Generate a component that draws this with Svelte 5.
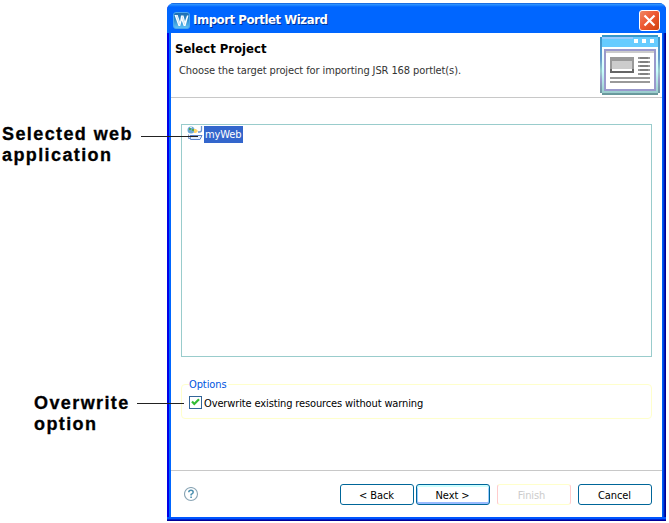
<script>
  // Tree contents and selection
  let projects = [{ id: 1, name: 'myWeb' }];
  let selected = 1;

  let overwrite = true;

  // Footer buttons
  const buttons = [
    { label: '< Back', kind: 'back' },
    { label: 'Next >', kind: 'next' },
    { label: 'Finish', kind: 'finish', disabled: true },
    { label: 'Cancel', kind: 'cancel' }
  ];
</script>

<div class="figure">
  <aside class="callouts">
    <div class="callout project">Selected web<br />application</div>
    <div class="callout option">Overwrite<br />option</div>
  </aside>

  <section class="window">
    <header class="titlebar">
      <svg class="logo" width="17" height="17" viewBox="0 0 17 17">
        <defs>
          <linearGradient id="logo-fill" x1="0" y1="0" x2="0" y2="1">
            <stop offset="0" stop-color="#1c6bb0" />
            <stop offset="0.500" stop-color="#2f8fd0" />
            <stop offset="1" stop-color="#62c4f8" />
          </linearGradient>
        </defs>
        <rect x="0.500" y="0.500" width="16" height="16" rx="2.500" fill="url(#logo-fill)" stroke="#4aa6ee" />
        <path d="M1.500 3h3.200l2.300 7L8 3.500h2.500l1.500 6L14 3.500h1.500L12.500 14h-1.800L8.700 8.500 7.200 14H5.500z" fill="#fff" />
        <path d="M3.500 3.500l3 9M9.200 4.500l2.500 8" stroke="#a5d3f2" stroke-width="0.700" />
      </svg>
      <h1>Import Portlet Wizard</h1>
      <button class="close" aria-label="Close">
        <svg width="21" height="21" viewBox="0 0 21 21">
          <defs>
            <linearGradient id="close-fill" x1="0" y1="0" x2="1" y2="1">
              <stop offset="0" stop-color="#f08a68" />
              <stop offset="0.450" stop-color="#ee5a34" />
              <stop offset="1" stop-color="#d0400c" />
            </linearGradient>
          </defs>
          <rect x="0.500" y="0.500" width="20" height="20" rx="2.500" fill="url(#close-fill)" stroke="#fff" />
          <path d="M5.500 5.500l10 10M15.500 5.500l-10 10" stroke="#fff" stroke-width="2.200" />
        </svg>
      </button>
    </header>

    <div class="banner">
      <div class="heading">
        <h2>Select Project</h2>
        <p>Choose the target project for importing JSR 168 portlet(s).</p>
      </div>
      <svg class="picture" width="60" height="60" viewBox="0 0 60 60" shape-rendering="crispEdges">
        <defs>
          <linearGradient id="frame" x1="0" y1="0" x2="0" y2="1">
            <stop offset="0" stop-color="#3399cc" />
            <stop offset="0.400" stop-color="#6699cc" />
            <stop offset="0.600" stop-color="#99cccc" />
            <stop offset="0.750" stop-color="#9999cc" />
            <stop offset="1" stop-color="#669999" />
          </linearGradient>
          <linearGradient id="frame-inner" x1="0" y1="0" x2="0" y2="1">
            <stop offset="0" stop-color="#fff" />
            <stop offset="0.500" stop-color="#ccffff" />
            <stop offset="1" stop-color="#99cccc" />
          </linearGradient>
        </defs>
        <path d="M2 0h56v2h2v56h-2v2H2v-2H0V2h2z" fill="url(#frame)" />
        <path d="M2 2h56v10H2z" fill="#66ccff" />
        <path d="M2 2h31v2H2z" fill="#99ccff" />
        <path d="M34 4h4v4h-4zM42 4h4v4h-4zM50 4h4v4h-4z" fill="#fff" />
        <path d="M2 12h56v46H2z" fill="url(#frame-inner)" />
        <path d="M4 14h52v42H4z" fill="#9999cc" />
        <path d="M6 16h48v38H6z" fill="#fff" />
        <path d="M6 16h48v2H6z" fill="#ccc" />
        <path d="M10 22h24v16H10z" fill="#666" />
        <path d="M10 22h24v12H10z" fill="#999" />
        <path d="M12 26h20v8H12z" fill="#ccc" />
        <path d="M12 34h20v2H12z" fill="#fff" />
        <path d="M38 23h12M38 27h12M38 31h12M38 35h12M38 39h12M10 43h40M10 47h40" stroke="#999" stroke-width="2" />
        <path d="M40 23h8M40 27h8M40 31h8M40 35h8M40 39h8" stroke="#808080" stroke-width="2" />
      </svg>
    </div>

    <main>
      <ul class="tree">
        {#each projects as project (project.id)}
          <li class:selected={project.id === selected}>
            <svg width="17" height="16" viewBox="0 0 17 16">
              <circle cx="4" cy="4" r="3.500" fill="#6ba8d4" />
              <path d="M2 2h2v2H2zM5 3h2v2H5z" fill="#55a855" />
              <path d="M3 1h2v1H3z" fill="#cfe8f8" />
              <path d="M7 3h2l2 2-2 2H7z" fill="#ffd36b" />
              <path d="M14.500 0v4q0 2-2 2h-1.500" fill="none" stroke="#6a94d0" stroke-width="1.300" />
              <path d="M3 9.500h12l-2 4H3.500z" fill="#e3eeff" stroke="#5a82c8" />
              <path d="M1.500 8.500v4h2" fill="none" stroke="#7f9bd0" />
            </svg>
            <span class="name">{project.name}</span>
          </li>
        {/each}
      </ul>

      <fieldset>
        <legend>Options</legend>
        <label>
          <input type="checkbox" bind:checked={overwrite} />
          <span class="box">
            {#if overwrite}
              <svg width="9" height="9" viewBox="0 0 9 9">
                <path d="M1 3.500l2.300 2.500L8 1.300" fill="none" stroke="#33bb33" stroke-width="2.200" />
              </svg>
            {/if}
          </span>
          <span class="text">Overwrite existing resources without warning</span>
        </label>
      </fieldset>
    </main>

    <footer>
      <button class="help" aria-label="Help">
        <svg width="15" height="15" viewBox="0 0 15 15">
          <circle cx="7" cy="7" r="6.500" fill="#fff" stroke="#8aa5b5" stroke-width="1.100" />
          <path d="M4.800 5.300Q4.800 3.300 7 3.300T9.200 5.200Q9.200 6.300 7.100 7.400V8.500" fill="none" stroke="#4c90b0" stroke-width="1.500" />
          <path d="M6.300 9.500h1.600V11H6.300z" fill="#4c90b0" />
        </svg>
      </button>
      <div class="actions">
        {#each buttons as button}
          <button class="action {button.kind}" disabled={button.disabled}>{button.label}</button>
        {/each}
      </div>
    </footer>
  </section>

  <!-- Leader lines run from the callouts into the dialog -->
  <i class="leader to-project"></i>
  <i class="leader to-option"></i>
</div>

<style>
  :global(body) {
    background: #fff;
    overflow: hidden;
  }

  .figure {
    position: relative;
    display: flex;
    box-sizing: border-box;
    width: 669px;
    height: 523px;
    padding-top: 3px;
    font-family: 'DejaVu Sans Condensed', 'DejaVu Sans', sans-serif;
    font-stretch: condensed;
    font-size: 11px;
    color: #000;
    white-space: nowrap;
  }

  h1,
  h2,
  p,
  ul {
    margin: 0;
    padding: 0;
  }

  button {
    padding: 0;
    font: inherit;
  }

  svg {
    display: block;
  }

  /* Callouts */
  .callouts {
    width: 167px;
    flex: none;
  }

  .callout {
    font: bold 18px/21px 'Liberation Sans', Arial, sans-serif;
    letter-spacing: 1.4px;
    -webkit-text-stroke: 0.3px #000;
  }

  .project {
    padding: 121px 0 0 2px;
  }

  .option {
    padding: 227px 0 0 34px;
  }

  .leader {
    position: absolute;
    height: 1px;
    background: #222;
  }

  .to-project {
    left: 141px;
    top: 136px;
    width: 57px;
  }

  .to-option {
    left: 137px;
    top: 403px;
    width: 47px;
  }

  /* Window frame */
  .window {
    display: flex;
    flex-direction: column;
    box-sizing: border-box;
    width: 499px;
    height: 518px;
    padding: 0 4px;
    border-radius: 7px 7px 0 0;
    background: linear-gradient(90deg, #0000e8 2px, #0066ff 2px, #0066ff 495px, #0055f0 496px, #0033cc 497px, #000099 498px);
    box-shadow: inset 0 -1px #000099, inset 0 -2px #0022cc, inset 0 -4px #0055ff;
  }

  .titlebar {
    display: flex;
    align-items: center;
    height: 30px;
    flex: none;
    margin: 0 -4px;
    padding: 4px 6px 0 6px;
    box-sizing: border-box;
    border-radius: 7px 7px 0 0;
    background: linear-gradient(#0044c8, #3399ff 1px, #0066ff 4px);
  }

  h1 {
    flex: 1;
    margin-left: 3px;
    font-size: 13px;
    line-height: 18px;
    letter-spacing: -0.44px;
    color: #fff;
    text-shadow: 1px 1px #003399;
  }

  .close {
    border: 0;
    background: none;
  }

  .banner {
    display: flex;
    box-sizing: border-box;
    height: 65px;
    flex: none;
    background: #fff;
    border-bottom: 1px solid #c8c8c8;
  }

  .heading {
    flex: 1;
    padding: 8px 0 0 4px;
  }

  h2 {
    font-size: 13px;
    line-height: 16px;
    letter-spacing: -0.02px;
  }

  p {
    margin: 7px 0 0 4px;
    line-height: 14px;
    letter-spacing: -0.1px;
    color: #333;
  }

  .picture {
    margin: 2px 2px 0 0;
  }

  main {
    flex: 1;
    padding: 26px 10px 0;
    background: #fff;
  }

  /* Project list */
  .tree {
    box-sizing: border-box;
    width: 471px;
    height: 233px;
    border: 1px solid #99cccc;
    list-style: none;
  }

  li {
    display: flex;
    padding: 1px 0 0 5px;
  }

  .name {
    box-sizing: border-box;
    width: 39px;
    height: 17px;
    padding-left: 1px;
    line-height: 18px;
    letter-spacing: -0.1px;
  }

  .selected .name {
    background: #3366cc;
    color: #fff;
  }

  /* Options group */
  fieldset {
    box-sizing: border-box;
    width: 471px;
    height: 42px;
    margin: 20px 0 0;
    padding: 0 0 0 7px;
    border: 1px solid #ffffcc;
    border-radius: 4px;
  }

  legend {
    height: 14px;
    padding: 0 2px 0 0;
    line-height: 16px;
    letter-spacing: -0.1px;
    color: #0055e0;
  }

  label {
    display: flex;
    gap: 2px;
    height: 14px;
    margin-top: 5px;
  }

  input {
    display: none;
  }

  .box {
    display: grid;
    place-items: center;
    box-sizing: border-box;
    width: 13px;
    height: 13px;
    border: 1px solid #336699;
    background: #fff;
  }

  .text {
    line-height: 15px;
    letter-spacing: -0.13px;
  }

  /* Footer */
  footer {
    display: flex;
    justify-content: space-between;
    box-sizing: border-box;
    height: 47px;
    flex: none;
    margin-bottom: 4px;
    padding: 13px 10px 0 13px;
    background: #fff;
    border-top: 1px solid #c8c8c8;
  }

  .help {
    height: 15px;
    margin-top: 3px;
    border: 0;
    background: none;
  }

  .actions {
    display: flex;
  }

  .action {
    box-sizing: border-box;
    width: 74px;
    height: 21px;
    padding: 1px 1px 0 0;
    border: 1px solid #006699;
    border-radius: 3px;
    background: #fff;
    color: #000;
    line-height: 19px;
    letter-spacing: -0.1px;
  }

  .next {
    margin-left: 2px;
    box-shadow: inset 0 2px #ccffff, inset 0 -2px #99bbff, inset 1px 0 #99ccff, inset -1px 0 #99ccff;
  }

  .finish {
    margin-left: 7px;
    padding-right: 5px;
    border-color: #ffffcc #ffcccc;
    color: #ccc;
  }

  .cancel {
    margin-left: 7px;
  }
</style>
